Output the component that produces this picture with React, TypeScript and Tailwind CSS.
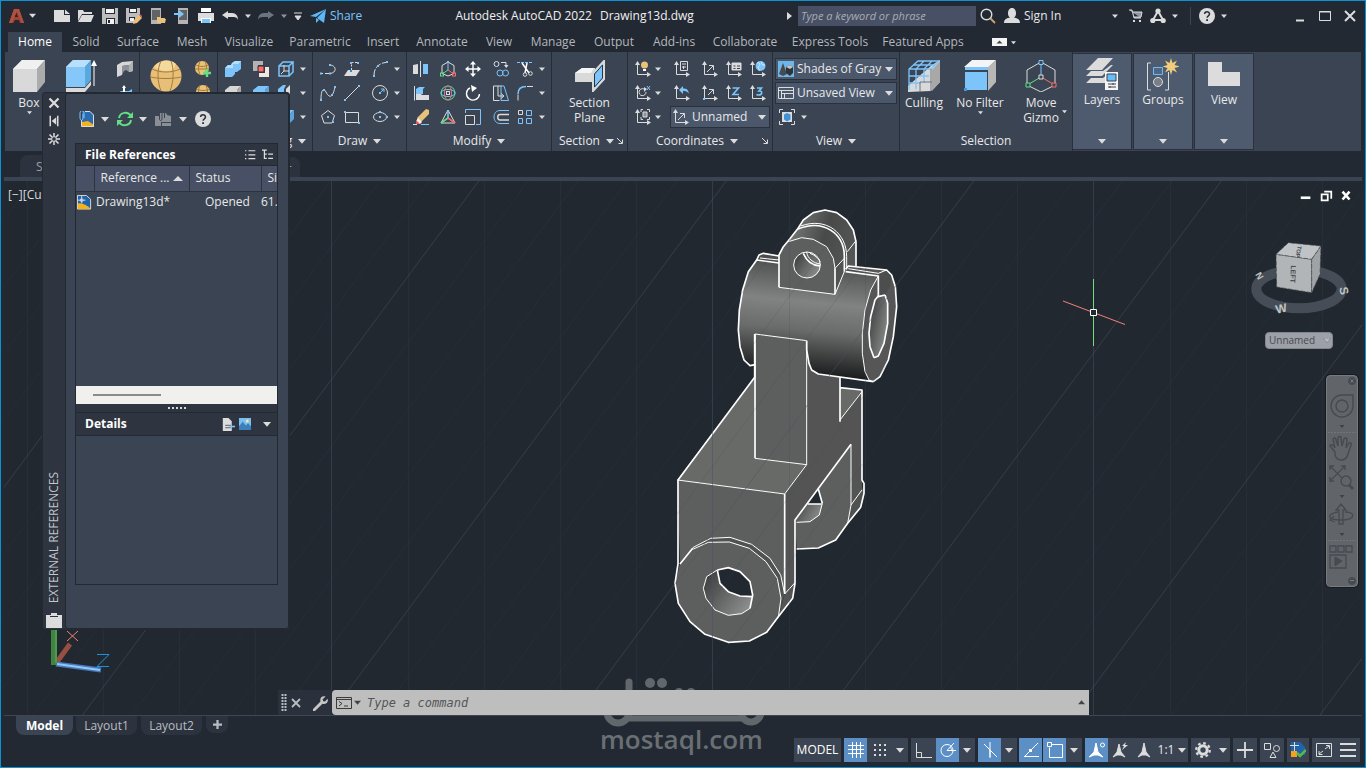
import type { ReactNode } from "react";

const W = "#dcdcdc";
const B = "#7cc4fa";
const G = "#62df84";
const R = "#f4706a";
const Y = "#e9c27a";

function Icon({ size = 16, box = 16, children }: { size?: number; box?: number; children: ReactNode }) {
  return (
    <svg width={size} height={size} viewBox={`0 0 ${box} ${box}`} fill="none" stroke={W} className="shrink-0" aria-hidden="true">
      {children}
    </svg>
  );
}

function Caret({ size = 6 }: { size?: number }) {
  return (
    <svg width={size} height={size} viewBox="0 0 6 6" className="shrink-0" aria-hidden="true">
      <path d="M0 1.5h6L3 5z" fill={W} />
    </svg>
  );
}

const dot = (x: number, y: number, c = B) => <rect key={`${x}-${y}`} x={x - 1} y={y - 1} width="2" height="2" fill={c} stroke="none" />;
const axes = (
  <>
    <path d="M2.5 1.5V13.5H13.5" />
    <path d="M0 4l2.5-4L5 4zM12 11v5l4-2.5z" fill={W} stroke="none" />
  </>
);
const help = (
  <>
    <circle cx="8" cy="8" r="8" fill={W} stroke="none" />
    <path d="M5.6 6c0-3 4.9-3 4.9 0 0 1.8-2.4 1.8-2.4 3.8" stroke="#2b323e" strokeWidth="1.5" />
    <rect x="7.2" y="11.2" width="1.8" height="1.8" fill="#2b323e" stroke="none" />
  </>
);

const icons: Record<string, ReactNode> = {
  logo: (
    <g stroke="none">
      <path d="M5 1h5l5 14h-4l-1-3H6l-2 3H0z" fill="#a14232" />
      <path d="M7 4l2 5H5.6z" fill="#222933" />
      <path d="M5 1h5l5 14h-2L8 3 3 15H0z" fill="#b0523f" />
    </g>
  ),
  new: <path d="M0 2h10v5h6v7H0z M11 1.500v4.500h5z" fill={W} stroke="none" />,
  open: <path d="M0 2h5l1 2h8v2H4L0 13zM4 7h12l-3 7H0z" fill={W} stroke="none" />,
  save: (
    <g stroke="none">
      <path d="M0 0h16v16H0z" fill="#bdbdbd" />
      <path d="M3 0h10v6H3zM4 10h9v6H4z" fill="#232a35" />
      <path d="M4 1h8v4H4zM5 11h7v5H5z" fill="#f2f2f2" />
      <path d="M6 12h2v3H6z" fill="#232a35" />
    </g>
  ),
  saveAs: (
    <g stroke="none">
      <path d="M0 0h14v8l-6 7H0z" fill="#bdbdbd" />
      <path d="M3 0h8v5H3zM3 9h6v4H3z" fill="#232a35" />
      <path d="M4 1h6v3H4zM4 10h4v3H4z" fill="#f2f2f2" />
      <path d="M7 16l1-4 5-5 3 3-5 5z" fill={Y} />
      <path d="M13 7l1-1 2 2v2z" fill="#e65b50" />
    </g>
  ),
  openMobile: (
    <g stroke="none">
      <path d="M1 0h10v16H1z" fill="#b5b5b5" />
      <path d="M2 2h8v10H2z" fill="#616467" />
      <path d="M7 9h3l1 1h4v1h1l-1 4H7z" fill={Y} />
    </g>
  ),
  saveMobile: (
    <g stroke="none">
      <path d="M4 0h10v16H4z" fill="#b5b5b5" />
      <path d="M5 2h8v10H5z" fill="#616467" />
      <path d="M0 5h5V2l5 4-5 4V7H0z" fill={B} />
    </g>
  ),
  print: (
    <g stroke="none">
      <path d="M3 0h10v4H3z" fill="#fff" />
      <path d="M0 5h16v8h-3v-3H3v3H0z" fill={W} />
      <path d="M3 10h10v5H3z" fill="#fff" />
      <path d="M4 11h8v4H4z" fill={B} />
    </g>
  ),
  undo: <path d="M0 7l6-4v2h4c4 0 6 3 6 7-1-3-3-3-6-3H6v2z" fill={W} stroke="none" />,
  redo: <path d="M16 7l-6-4v2H6C2 5 0 8 0 12c1-3 3-3 6-3h4v2z" fill="#6c7480" stroke="none" />,
  custom: <path d="M4 5h8M5 8h6l-3 4z" fill={W} />,
  share: (
    <g stroke="none" fill="#5fb8f5">
      <path d="M0 8L16 1 6 9z" />
      <path d="M7 10L16 1l-2 14z" />
      <path d="M6 10v5l3-3z" />
    </g>
  ),
  search: (
    <>
      <circle cx="6.5" cy="6.5" r="5.3" strokeWidth="1.4" />
      <path d="M10.5 10.5l4.5 4.5" stroke="#cfa36c" strokeWidth="1.8" />
    </>
  ),
  user: <path d="M8 0c5 0 5 9 1.800 9.500 3 .5 6.200 1.500 6.200 5.500H0c0-4 3-5 6.200-5.500C3 9 3 0 8 0z" fill={W} stroke="none" />,
  cart: (
    <>
      <path d="M1 2h3l2 8h7M5 4h9l-1 5H6" fill="#9096a0" />
      <path d="M5 12h2v2H5zM11 12h2v2h-2z" fill={W} stroke="none" />
    </>
  ),
  apps: (
    <>
      <path d="M8 3l5 9H3z" strokeWidth="2" />
      <g fill={W} stroke="none">
        <circle cx="8" cy="3" r="2.6" />
        <circle cx="2.800" cy="12.500" r="2.600" />
        <circle cx="13.200" cy="12.500" r="2.600" />
      </g>
    </>
  ),
  help,
  polysolid: (
    <g stroke="none">
      <path d="M0 4L5 1l11-1v10l-4 1V4L5 5v9l-5 2z" fill="#d7d7d7" />
      <path d="M5 5l7-1v7l-3-2-2 1-2 4z" fill="#8d9299" />
      <path d="M12 4l4-4v10l-4 1z" fill="#b0b0b0" />
    </g>
  ),
  presspull: (
    <g stroke="none">
      <path d="M0 9l4-3h8l3-2v8H0z" fill={B} />
      <path d="M7 0l2 3H8v6H6V3H5z" fill="#fff" />
    </g>
  ),
  meshPlus: (
    <>
      <circle cx="7" cy="7" r="7" fill={Y} stroke="none" />
      <path d="M1 4c4 2 8 2 12 0M0 8h14M5 0c-2 5-2 9 0 14M10 0c2 5 2 9 0 14" stroke="#a5782f" />
      <path d="M12 8v8M8 12h8" stroke={G} strokeWidth="2.400" />
    </>
  ),
  meshMinus: (
    <>
      <circle cx="8" cy="7" r="7" fill={Y} stroke="none" />
      <path d="M1 4c5 2 9 2 14 0M1 8h14M5 0c-2 5-2 9 0 14M11 0c2 5 2 9 0 14" stroke="#a5782f" />
    </>
  ),
  union: (
    <g stroke="none">
      <path d="M0 7l3-3h3l1-2 3-2h6v8l-4 3h-2v2l-3 3H0z" fill={B} />
      <path d="M0 7l3-3h3l1-2 3-2h6l-3 3H8v4z" fill="#b5defc" />
    </g>
  ),
  intersect: (
    <>
      <path d="M0 0h10v4h-5v6H0z" fill="#b3b3b3" stroke="none" />
      <path d="M12 6h4v10H6v-4h6z" fill="#f0e6e2" stroke="none" />
      <path d="M5 5h6v6H5z" fill={R} stroke="#3b2930" />
    </>
  ),
  extractEdges: (
    <>
      <path d="M1 5h10v10H1zM1 5l4-4h10L11 5M15 1v10l-4 4" stroke={B} strokeWidth="1.500" />
      <path d="M3 13l3-3V4M6 10h5" />
    </>
  ),
  box: (
    <g stroke="none">
      <path d="M0 5l5-4h11l-4 4v7H0z" fill="#d6d6d6" />
      <path d="M12 5l4-4v9l-4 4z" fill="#aaa" />
    </g>
  ),
  boxBlue: (
    <g stroke="none">
      <path d="M0 5l5-4h11l-4 4v7H0z" fill={B} />
      <path d="M12 5l4-4v9l-4 4z" fill="#5aa5dc" />
    </g>
  ),
  slice: (
    <g stroke="none">
      <path d="M0 4l5-4h3L6 4v12H0z" fill={B} />
      <path d="M8 4l4-4v12l-4 4z" fill={W} />
    </g>
  ),
  polyline: (
    <>
      <path d="M1 12.500h2M5 12.500h4M9 4c8 0 8 8 1 8.500" />
      {dot(1, 12.500)}
      {dot(10, 12.500)}
      {dot(10, 4)}
    </>
  ),
  region: (
    <>
      <path d="M4 9h12l-4 6H0z" fill={W} stroke="none" />
      <path d="M7.500 9V1.500M7.500 1.500H14" stroke={W} strokeDasharray="2 1.500" />
      {dot(7, 10, "#2d8bd8")}
      {dot(7, 2)}
      {dot(14, 2)}
    </>
  ),
  arc: (
    <>
      <path d="M2 14C2 7 7 2 14 1.500" strokeDasharray="6 1.500" />
      {dot(2, 15)}
      {dot(6, 5)}
      {dot(15, 1)}
    </>
  ),
  spline: (
    <>
      <path d="M1 14C1 4 4 3 6 7s6 9 9-5" />
      {dot(1, 15)}
      {dot(4, 5)}
      {dot(12, 10)}
      {dot(15, 2)}
    </>
  ),
  line: (
    <>
      <path d="M2 14L14 2" />
      {dot(1, 15)}
      {dot(15, 1)}
    </>
  ),
  circle: (
    <>
      <circle cx="8" cy="8" r="7.500" />
      <path d="M8 8l4-4M9 4h3v3" stroke={B} />
      {dot(8, 8)}
    </>
  ),
  polygon: (
    <>
      <path d="M8 1.500l6.500 5-2.500 7.500H4L1.500 6.500z" />
      {dot(8, 8)}
      {dot(13, 13)}
    </>
  ),
  rect: (
    <>
      <path d="M1.500 3.500h13v10h-13z" />
      {dot(1, 3)}
      {dot(15, 14)}
    </>
  ),
  ellipse: (
    <>
      <ellipse cx="8" cy="8" rx="6.500" ry="4.500" />
      {dot(8, 8)}
      {dot(15, 8)}
      {dot(8, 3)}
    </>
  ),
  mirror3d: (
    <>
      <path d="M0 4l5-1v10H0z" fill={W} stroke="none" />
      <path d="M10 3h5v10h-5z" fill={B} stroke="none" />
      <path d="M7.500 0v16" />
    </>
  ),
  gizmoMove: (
    <>
      <path d="M8 1l6 3.500v8L8 15l-6-2.500v-8z" />
      <path d="M8 9V2" stroke={B} />
      <path d="M8 9l-6 4" stroke={G} />
      <path d="M8 9l6 4" stroke={R} />
      {dot(8, 1)}
      <rect x="0.500" y="12" width="3" height="3" stroke={G} />
      <rect x="12.500" y="12" width="3" height="3" stroke={R} />
    </>
  ),
  move: (
    <>
      <path d="M8 2v12M2 8h12" strokeWidth="1.400" stroke="#fff" />
      <path d="M8 0l3 3.500H5zM8 16l3-3.500H5zM0 8l3.500-3v6zM16 8l-3.500-3v6z" fill="#fff" stroke="none" />
    </>
  ),
  copy: (
    <>
      <circle cx="3.500" cy="3" r="2.500" />
      <circle cx="7" cy="12" r="3" stroke={B} />
      <circle cx="12.500" cy="12" r="3" stroke={B} />
      <path d="M8 1.500h5v4" />
      <path d="M11 4h4.500L13.300 7z" fill={W} stroke="none" />
    </>
  ),
  trim: (
    <>
      <path d="M0 1.500h16" stroke={B} strokeDasharray="3 1" />
      <path d="M5 2l7 10M10 2L8 12" stroke="#fff" strokeWidth="1.500" />
      <circle cx="8" cy="13.500" r="1.800" />
      <circle cx="13.500" cy="12.500" r="1.800" />
    </>
  ),
  align: (
    <>
      <path d="M1.500 1v14.500" />
      <path d="M3 8h4l2 2h7v5H3z" fill={W} stroke="none" />
      <path d="M3 4l3-2h6l-2 2v5H3z" fill={B} stroke="none" />
    </>
  ),
  gizmoRotate: (
    <>
      <circle cx="8" cy="8" r="7" stroke={G} />
      <ellipse cx="8" cy="8" rx="3.500" ry="7" stroke={R} />
      <ellipse cx="8" cy="8" rx="7" ry="3.500" stroke={B} />
      <rect x="6.500" y="6.500" width="3" height="3" />
    </>
  ),
  rotate: (
    <>
      <path d="M5 2.800A6.500 6.500 0 1 0 14.500 9" strokeWidth="1.400" stroke="#fff" />
      <path d="M6 0l6 3-5 4z" fill="#fff" stroke="none" />
    </>
  ),
  stretch: (
    <>
      <path d="M8.500 1H.5v14.500h6" />
      <path d="M8 1h3L15.500 15.500H8z" stroke={B} />
      <path d="M5 1v10h5M8 8.500l3 2.500-3 2.500" />
    </>
  ),
  fillet: (
    <>
      <path d="M1 15.500v-6M10 1.500h6" />
      <path d="M1 9C1 4 4 1.500 9 1.500" stroke={B} strokeWidth="1.500" />
    </>
  ),
  erase: (
    <>
      <path d="M4 9L13 0l3 1v4l-8 8z" fill={Y} stroke="none" />
      <path d="M5 9l4 4-2 2H4l-1-3z" fill="#f3f3f3" stroke="none" />
      <path d="M3 11l4 4H3z" fill="#e9564c" stroke="none" />
      <path d="M0 15.500h4" />
      <path d="M8 15.500h8" stroke={B} />
    </>
  ),
  gizmoScale: (
    <>
      <path d="M8 1L1 14h14z" />
      <path d="M8 9V1" stroke={B} strokeWidth="1.600" />
      <path d="M8 9l-7 5" stroke={G} strokeWidth="1.600" />
      <path d="M8 9l7 5" stroke={R} strokeWidth="1.600" />
    </>
  ),
  scale: (
    <>
      <path d="M.5 4V.5h15v15H11" stroke={B} />
      <path d="M.5 6.500h9v9h-9z" />
    </>
  ),
  offset: (
    <>
      <path d="M16 1.500H7c-8 0-8 13 0 13h9" stroke={B} />
      <path d="M16 5.500H7C4 5.500 4 11 7 11h9" strokeWidth="1.400" />
    </>
  ),
  array: (
    <>
      <path d="M1.500 1.500h4v4h-4z" />
      <path d="M9.500 1.500h5v5h-5zM9.500 9.500h5v5h-5zM1.500 9.500h4v5h-4z" stroke={B} />
    </>
  ),
  ucsBulb: (
    <>
      {axes}
      <circle cx="9.500" cy="4" r="3.500" fill={Y} stroke="none" />
      <path d="M8 8h3v2H8z" fill="#fff" stroke="none" />
    </>
  ),
  ucsWorld: (
    <>
      {axes}
      <circle cx="10.500" cy="5" r="5" fill={B} stroke="none" />
      <path d="M7 2c2-1 4 1 2 3s1 3 0 5M12 1c-1 2 0 3 3 3" stroke="#dff0fd" />
    </>
  ),
  ucsNamed: (
    <>
      {axes}
      <path d="M6.500.5h7v9h-7zM8 3h4M8 6h4M9.500 5v3" />
    </>
  ),
  ucsArrow: (
    <>
      {axes}
      <path d="M5 11l6-6M7 4.500h4.500V9" />
    </>
  ),
  ucsList: (
    <>
      {axes}
      <path d="M6 2h9v7H6z" fill={W} />
      <path d="M7.500 5h2M11 5h3M7.500 7.500h2M11 7.500h3" stroke="#3b4453" />
    </>
  ),
  ucsRotate: (
    <>
      {axes}
      <path d="M9 4a3.500 3.500 0 1 0 2 3" />
      <path d="M9 2l3 2-3 3z" fill={W} stroke="none" />
      <path d="M12 1l3 4M15 1l-3 4" stroke={B} />
    </>
  ),
  ucsPrev: (
    <>
      {axes}
      <path d="M5 5l4-4v2.500c4 0 5 1 6 5-2-2-3-2.500-6-2.500V9z" fill={B} stroke="none" />
    </>
  ),
  ucsOrigin: (
    <>
      {axes}
      <path d="M6 10l5-5M7 4.500h4.500V9" />
      {dot(2, 14)}
    </>
  ),
  ucsZ: (
    <>
      {axes}
      <path d="M6.500 3h6L7 9.500h6" stroke={B} strokeWidth="1.600" />
    </>
  ),
  ucs3: (
    <>
      {axes}
      <path d="M7 3h4.500L9 6c4-.5 3.500 4-.5 4-1 0-2-.5-2-.5" stroke={B} strokeWidth="1.600" />
    </>
  ),
  ucsView: (
    <>
      {axes}
      <path d="M6 3V.5h2M12 .5h2.500V3M14.500 8v2.500H12M8 10.500H6V8" />
      <path d="M8 3h4v5H8z" fill="#8b9099" />
    </>
  ),
  viewFrame: (
    <>
      <path d="M.5 4V.5H4M12 .5h3.500V4M15.500 12v3.500H12M4 15.500H.5V12" />
      <path d="M3 3h10v10H3z" fill={W} stroke="none" />
      <path d="M5 5.500L8 4l3.500 1.500v5L8 12.500l-3-2z" fill="#3f93d6" stroke="none" />
    </>
  ),
  shades: (
    <g stroke="none">
      <path d="M0 0h16v16H0z" fill="#6db6ea" />
      <path d="M1 13L5 2l4 11-4 2z" fill="#474b50" />
      <path d="M8 6l4-2 3 2v6l-3 3-4-3z" fill="#303338" />
      <path d="M8 6l4-2 3 2-3 2z" fill="#c3c5c7" />
    </g>
  ),
  viewport: (
    <path d="M.5 2.500h15v11H.5zM.5 5.500h15M3.500 5.500v8M3.500 8.500h12M6.500 8.500v5" />
  ),
  attach: (
    <>
      <path d="M3 0h8l4 4v12H3z" fill="#2b6cb0" stroke="none" />
      <path d="M3 11l6-1 6 4v2H3z" fill="#f6b21b" stroke="none" />
      <path d="M2.500 9v6.500h12V4L11 .5H6" />
      <path d="M4 3v4c0 3-3 3-3 0V2c0-3 4-3 4 0v5" stroke={B} />
    </>
  ),
  refresh: (
    <>
      <path d="M2 7c1-6 9-7 12-2M14 9c-1 6-9 7-12 2" stroke={G} strokeWidth="2" />
      <path d="M16 1v6h-6zM0 15V9h6z" fill={G} stroke="none" />
    </>
  ),
  path: (
    <>
      <path d="M0 5h4V2h7l1 2 4 1v10H0z" fill="#8a8f96" stroke="none" />
      <path d="M7 2v6c0 2-2.500 2-2.500 0V2c0-3 5-3 5 0v5M6 11.500h10M6.500 11.500V15" stroke="#3b4453" />
    </>
  ),
  drawing: (
    <>
      <path d="M.5.5H10l4.500 4V15H.5z" fill="#1f63ab" />
      <path d="M1 9c5-1 9 2 13 5v1H1z" fill="#f6b21b" stroke="none" />
      <path d="M5 1v8M1 5.500h8" />
      <circle cx="5" cy="5.500" r="1.500" />
    </>
  ),
  list: <path d="M5 2.500h10M5 8.500h10M5 14h10M0 2.500h2M0 8.500h2M0 14h2" strokeWidth="1.600" />,
  tree: <path d="M0 1.500h7M3.500 2v11.500H7M3.500 7.500H7M9 7.500h7M9 13.500h7" strokeWidth="1.800" />,
  details: (
    <>
      <path d="M1 0h7l4 4v12H1z" fill={W} stroke="none" />
      <path d="M4 9h7M4 12h7" stroke="#39414e" />
      <path d="M9 10.500h7" stroke={B} strokeWidth="2" />
    </>
  ),
  preview: (
    <g stroke="none">
      <path d="M0 0h16v16H0z" fill="#79bff0" />
      <path d="M0 11l5-6 4 5 3-3 4 4v5H0z" fill="#3d7fb8" />
      <circle cx="11" cy="4" r="2" fill="#fbe59a" />
    </g>
  ),
  wrench: <path d="M1 14l7.500-7.500C7.500 3 10 .5 13.500 1.500l-3 3 .8 1.700 1.700.3 2.700-2.700c1 3.500-2 6-5.200 5L3 16H1z" fill="#c5c5c5" stroke="none" />,
  prompt: (
    <>
      <path d="M.5 2.500h15v11H.5zM.5 4.500h15" stroke="#3a3a3a" />
      <path d="M3 6.500l3 2-3 2.500M8 11h4" stroke="#3a3a3a" />
    </>
  ),
  grid: <path d="M4.500 0v16M8.500 0v16M12.500 0v16M0 3.500h16M0 7.500h16M0 11.500h16" stroke="#fff" />,
  snap: (
    <g fill={W} stroke="none">
      {[2, 7, 12].map((y) => [2, 7, 12].map((x) => <rect key={`${x}${y}`} x={x} y={y} width="2" height="2" />))}
    </g>
  ),
  ortho: <path d="M.5 1v14.500H16M.5 10.500h5v5" />,
  polar: (
    <>
      <circle cx="7" cy="8.500" r="6" stroke="#fff" />
      <path d="M7 8.500h9M7 8.500L14 1M10 5c1 1 1.500 2 1.500 3.500" stroke="#fff" />
    </>
  ),
  iso: <path d="M8 0v16M2 2l13 13M5 5l3 3v7" stroke="#fff" />,
  otrack: (
    <>
      <path d="M1 14.500h15M2 14L15 1" stroke="#fff" />
      <path d="M6 7h3v3H6z" fill="#fff" stroke="none" />
    </>
  ),
  osnap: (
    <>
      <path d="M4.500 2.500h11v13h-13v-10" stroke="#fff" />
      <path d="M.5.5h4v4h-4z" stroke="#fff" fill="#5b8fc5" />
    </>
  ),
  annoA: (
    <>
      <path d="M7 1l2 9 5 5-5-2H5l-5 2 5-5z" fill="#fff" stroke="#fff" />
      <circle cx="13.500" cy="3" r="2" stroke="#fff" />
    </>
  ),
  annoB: (
    <>
      <path d="M7 2l2 8 4 5-4-2H5l-4 2 4-5z" fill={W} />
      <path d="M14 0l-4 4h2l-2 4 6-5h-3z" fill={W} stroke="none" />
    </>
  ),
  anno: <path d="M8 1l2 9 4 5-4-2H6l-4 2 4-5z" fill={W} />,
  gear: (
    <>
      <circle cx="8" cy="8" r="4.200" strokeWidth="3" />
      <circle cx="8" cy="8" r="6.800" strokeWidth="2.200" strokeDasharray="2.670 2.670" />
    </>
  ),
  plus: <path d="M8 0v16M0 8h16" strokeWidth="1.800" />,
  isolate: (
    <>
      <path d="M.5 1.500h6v6h-6zM6 15.500l3-5.500 3 5.500z" />
      <circle cx="12.500" cy="6.500" r="3" />
    </>
  ),
  perf: (
    <>
      <path d="M1 0h9l5 5v8H1z" fill="#1f63ab" stroke="none" />
      <path d="M0 3.500h9M4.500 0v9" />
      <path d="M1 9h6v6H1z" fill="#f6a21b" stroke="none" />
      <path d="M7 11l3 3 6-6" stroke="#56b848" strokeWidth="2.600" />
    </>
  ),
  clean: (
    <>
      <path d="M.5 1.500h15v13H.5z" />
      <path d="M9 7l4-3M10 3.500h3.500V7M7 9l-4 3M3 9v3.500h3.500" />
    </>
  ),
  menu: <path d="M0 2h16M0 8h16M0 14h16" strokeWidth="1.800" />,
};

function Tool({ name, label }: { name: string; label?: string }) {
  return (
    <button type="button" aria-label={label ?? name} className="flex h-6 items-center">
      <Icon>{icons[name]}</Icon>
    </button>
  );
}

function More() {
  return (
    <button type="button" aria-label="More" className="flex h-6 items-center">
      <Caret />
    </button>
  );
}

function TitleBar() {
  const quick = ["new", "open", "save", "saveAs", "openMobile", "saveMobile", "print", "undo"];
  return (
    <header className="-mr-px flex h-[29px] items-center">
      <button type="button" aria-label="Application menu" className="mr-3 flex w-[33px] items-center gap-1 pl-1">
        <Icon>{icons.logo}</Icon>
        <Caret size={7} />
      </button>
      {quick.map((name) => (
        <button key={name} type="button" aria-label={name} className="flex w-6 justify-center">
          <Icon>{icons[name]}</Icon>
        </button>
      ))}
      <button type="button" aria-label="Undo history" className="flex w-3 justify-center"><Caret /></button>
      <button type="button" aria-label="Redo" className="flex w-6 justify-center"><Icon>{icons.redo}</Icon></button>
      <button type="button" aria-label="Redo history" className="flex w-3 justify-center opacity-60"><Caret /></button>
      <button type="button" aria-label="Customize" className="flex w-4 justify-center"><Icon>{icons.custom}</Icon></button>
      <button type="button" className="ml-1 flex items-center gap-1 text-[#7cc4fa]">
        <Icon>{icons.share}</Icon>
        Share
      </button>
      <h1 className="flex flex-1 justify-center gap-2 whitespace-nowrap text-[#f0f0f0]">
        <span>Autodesk AutoCAD 2022</span>
        <span>Drawing13d.dwg</span>
      </h1>
      <button type="button" aria-label="Collapse search" className="mr-1.5">
        <svg width="5" height="8" viewBox="0 0 5 8"><path d="M0 0l5 4-5 4z" fill={W} /></svg>
      </button>
      <input
        type="text"
        aria-label="Search"
        placeholder="Type a keyword or phrase"
        className="h-5 w-[178px] bg-[#475064] px-[3px] text-[11px] italic placeholder:text-[#a9adb5]"
      />
      <button type="button" aria-label="Search" className="flex w-6 justify-center"><Icon>{icons.search}</Icon></button>
      <button type="button" className="ml-1 flex w-[114px] items-center gap-1">
        <Icon>{icons.user}</Icon>
        <span className="mr-auto">Sign In</span>
        <Caret />
      </button>
      <button type="button" aria-label="Store" className="ml-2 flex w-5 justify-center"><Icon>{icons.cart}</Icon></button>
      <button type="button" aria-label="Apps" className="ml-1 flex items-center gap-1.5"><Icon>{icons.apps}</Icon><Caret /></button>
      <span className="ml-3 mr-2 h-[18px] w-px bg-[#3d4656]" />
      <button type="button" aria-label="Help" className="mr-15 flex items-center gap-1.5"><Icon>{icons.help}</Icon><Caret /></button>
      <button type="button" aria-label="Minimize" className="flex w-[25px] justify-center"><Icon><path d="M4 12.500h8" strokeWidth="2" /></Icon></button>
      <button type="button" aria-label="Maximize" className="flex w-[25px] justify-center"><Icon><path d="M2.500 3.500h11v9h-11zM2 4h12" /></Icon></button>
      <button type="button" aria-label="Close" className="flex w-[25px] justify-center"><Icon><path d="M3 3l10 10M13 3L3 13" strokeWidth="2" /></Icon></button>
    </header>
  );
}

const ribbonTabs = [
  { name: "Solid", width: "w-[48px]" },
  { name: "Surface", width: "w-[56px]" },
  { name: "Mesh", width: "w-[52px]" },
  { name: "Visualize", width: "w-[62px]" },
  { name: "Parametric", width: "w-[80px]" },
  { name: "Insert", width: "w-[46px]" },
  { name: "Annotate", width: "w-[72px]" },
  { name: "View", width: "w-[42px]" },
  { name: "Manage", width: "w-[66px]" },
  { name: "Output", width: "w-[56px]" },
  { name: "Add-ins", width: "w-[64px]" },
  { name: "Collaborate", width: "w-[78px]" },
  { name: "Express Tools", width: "w-[92px]" },
  { name: "Featured Apps", width: "w-[94px]" },
];

function RibbonTabs() {
  return (
    <nav className="mt-[2px] flex h-5 items-center whitespace-nowrap pl-[3px] text-[#b4b7bc]">
      <button type="button" className="h-full w-[54px] shrink-0 bg-[#3b4453] text-white">Home</button>
      {ribbonTabs.map((tab) => (
        <button key={tab.name} type="button" className={`shrink-0 text-center ${tab.width}`}>{tab.name}</button>
      ))}
      <button type="button" aria-label="Ribbon display" className="ml-[22px] flex items-center gap-1">
        <svg width="15" height="8" viewBox="0 0 15 8"><path d="M0 0h15v8H0z" fill="#f4f4f4" /><path d="M4.500 5.500h6l-3-3z" fill="#444" /></svg>
        <Caret size={5} />
      </button>
    </nav>
  );
}

function Panel({ title, width, caret = true, launcher = false, children }: {
  title?: string; width: string; caret?: boolean; launcher?: boolean; children: ReactNode;
}) {
  return (
    <section className={`flex shrink-0 flex-col border-r border-[#252c37] pt-[5px] ${width}`}>
      <div className="h-[72px]">{children}</div>
      <div className="flex h-[22px] items-center px-1 pt-0.5">
        <h2 className="flex flex-1 items-center justify-center gap-1.5">
          {title}
          {caret && <Caret size={8} />}
        </h2>
        {launcher && (
          <button type="button" aria-label={`${title} settings`}>
            <svg width="6" height="6" viewBox="0 0 6 6" fill="none" stroke={W}><path d="M0 0l5 5M5.500 1.500v4h-4" /></svg>
          </button>
        )}
      </div>
    </section>
  );
}

function BigTool({ label, width, caret = false, children }: { label: string; width: string; caret?: boolean; children: ReactNode }) {
  return (
    <button type="button" className={`flex shrink-0 flex-col items-center pt-[3px] leading-[15px] ${width}`}>
      {children}
      <span className="mt-[3px] whitespace-pre-line">{label}</span>
      {caret && <Caret size={5} />}
    </button>
  );
}

function Combo({ icon, label, value }: { icon: string; label: string; value: string }) {
  return (
    <label className="relative flex h-[22px] w-full items-center gap-[3px] border border-[#2a313d] bg-[#4b576b] pl-0.5">
      <Icon>{icons[icon]}</Icon>
      <select aria-label={label} className="h-full min-w-0 flex-1 appearance-none pr-3 outline-none">
        <option>{value}</option>
      </select>
      <span className="pointer-events-none absolute right-[3px] flex"><Caret size={8} /></span>
    </label>
  );
}

function CollapsedPanel({ title, children }: { title: string; children: ReactNode }) {
  return (
    <button type="button" className="mr-[3px] mt-0.5 flex h-[95px] w-[58px] shrink-0 flex-col items-center bg-[#4e5b6f] pt-1 outline outline-[#2a313d]">
      <svg width="32" height="34" viewBox="0 0 32 34" fill="none" aria-hidden="true">{children}</svg>
      <span>{title}</span>
      <span className="mb-1 mt-auto"><Caret size={8} /></span>
    </button>
  );
}

function Ribbon() {
  return (
    <div className="flex h-[99px] overflow-hidden bg-[#3b4453]">
      <Panel title="Modeling" width="w-[135px]" caret={false}>
        <div className="flex">
          <BigTool label="Box" width="w-12" caret>
            <svg width="32" height="32" viewBox="0 0 32 32">
              <path d="M0 9l9-9h23l-8 9v23H0z" fill="#d9d9d9" />
              <path d="M0 9l9-9h23l-8 9z" fill="#f0f0f0" />
              <path d="M24 9l8-9v22l-8 10z" fill="#acacac" />
            </svg>
          </BigTool>
          <BigTool label="Extrude" width="w-[58px]" caret>
            <svg width="32" height="32" viewBox="0 0 32 32">
              <path d="M0 7l7-7h18l-6 7v20H0z" fill="#84c7f8" />
              <path d="M0 7l7-7h18l-6 7z" fill="#b9e0fb" />
              <path d="M19 7l6-7v20l-6 7z" fill="#5aa9dc" />
              <path d="M0 28h19l6-7v4l-6 7H0z" fill="#dadada" />
              <path d="M28 26V3" stroke="#fff" />
              <path d="M25 6l3-6 3 6z" fill="#fff" />
            </svg>
          </BigTool>
          <div className="ml-1.5 flex flex-col">
            <Tool name="polysolid" />
            <Tool name="presspull" />
          </div>
        </div>
      </Panel>
      <Panel width="w-[78px]" caret={false}>
        <div className="flex">
          <BigTool label="Smooth" width="w-[51px]">
            <svg width="32" height="32" viewBox="0 0 32 32" fill="none">
              <circle cx="16" cy="16" r="15.500" fill="#e8bf78" />
              <path d="M4 7c5-7 16-9 22-3-2 4-2 5-3 6-7 2-13 1-19-3z" fill="#f4d99d" />
              <path d="M2 9c8 4 20 4 28 0M.5 17c9 2 22 2 31 0M11 1c-4 8-4 20 0 30M21 1c3 8 3 20-1 30" stroke="#a67c38" />
            </svg>
          </BigTool>
          <div className="ml-1 flex flex-col">
            <Tool name="meshPlus" />
            <Tool name="meshMinus" />
          </div>
        </div>
      </Panel>
      <Panel title="Solid Editing" width="w-[95px]">
        <div className="grid grid-cols-[28px_25px_22px_8px] pl-[7px]">
          <Tool name="union" /><Tool name="intersect" /><Tool name="extractEdges" /><More />
          <Tool name="box" label="Subtract" /><Tool name="boxBlue" label="Interfere" /><Tool name="slice" /><More />
          <Tool name="box" label="Thicken" /><Tool name="box" label="Imprint" /><Tool name="boxBlue" label="Shell" /><More />
        </div>
      </Panel>
      <Panel title="Draw" width="w-[94px]">
        <div className="grid grid-cols-[24px_28px_22px_8px] pl-[7px]">
          <Tool name="polyline" /><Tool name="region" /><Tool name="arc" /><More />
          <Tool name="spline" /><Tool name="line" /><Tool name="circle" /><More />
          <Tool name="polygon" /><Tool name="rect" /><Tool name="ellipse" /><More />
        </div>
      </Panel>
      <Panel title="Modify" width="w-[145px]">
        <div className="grid grid-cols-[27px_25px_28px_24px_22px_8px] pl-1.5">
          <Tool name="mirror3d" /><Tool name="gizmoMove" /><Tool name="move" /><Tool name="copy" /><Tool name="trim" /><More />
          <Tool name="align" /><Tool name="gizmoRotate" /><Tool name="rotate" /><Tool name="stretch" /><Tool name="fillet" /><More />
          <Tool name="erase" /><Tool name="gizmoScale" /><Tool name="scale" /><Tool name="offset" /><Tool name="array" /><More />
        </div>
      </Panel>
      <Panel title="Section" width="w-[76px]" launcher>
        <BigTool label={"Section\nPlane"} width="w-full">
          <svg width="32" height="32" viewBox="0 0 32 32">
            <path d="M1 13l7-5h13v14H1z" fill="#d9d9d9" />
            <path d="M1 13l7-5h12l-3 5z" fill="#f5f5f5" />
            <path d="M19 13L30 1v18L19 31z" fill={B} stroke="#d9d9d9" strokeWidth="2" />
            <path d="M20.500 14L28.500 5v13l-8 9z" fill={B} stroke="#2a3340" />
          </svg>
        </BigTool>
      </Panel>
      <Panel title="Coordinates" width="w-[145px]" launcher>
        <div className="grid grid-cols-[20px_15px_32px_24px_24px_20px] pl-[7px]">
          <Tool name="ucsBulb" /><More /><div className="pl-1"><Tool name="ucsNamed" /></div><Tool name="ucsArrow" /><Tool name="ucsList" /><Tool name="ucsWorld" />
          <Tool name="ucsRotate" /><More /><div className="pl-1"><Tool name="ucsPrev" /></div><Tool name="ucsOrigin" /><Tool name="ucsZ" /><Tool name="ucs3" />
          <Tool name="ucsView" /><More />
          <div className="col-span-4 flex items-center"><Combo icon="ucsArrow" label="Named UCS" value="Unnamed" /></div>
        </div>
      </Panel>
      <Panel title="View" width="w-[127px]">
        <div className="flex flex-col px-0.5 pt-px">
          <Combo icon="shades" label="Visual style" value="Shades of Gray" />
          <div className="my-0.5 flex"><Combo icon="viewport" label="Saved view" value="Unsaved View" /></div>
          <div className="-mt-px flex gap-1.5 pl-1"><Tool name="viewFrame" /><More /></div>
        </div>
      </Panel>
      <Panel title="Selection" width="w-[173px]" caret={false}>
        <div className="flex">
          <BigTool label="Culling" width="w-12">
            <svg width="32" height="32" viewBox="0 0 32 32" fill="none">
              <path d="M0 32V26L24 5l8-5v22l-9 9z" fill="#d9d9d9" />
              <path d="M24 10l8-9v21l-8 9z" fill="#a8a8a8" />
              <path d="M1 30V9l9-8h21l-8 8H1M1 16h20M1 23h12M8 9v20M16 9v14M8 9l8-8M16 9l8-8M5 5h22" stroke={B} strokeWidth="1.300" />
              <path d="M12 22v10M23 9v22M12 22h12" stroke="#6e747c" />
            </svg>
          </BigTool>
          <BigTool label="No Filter" width="w-16" caret>
            <svg width="32" height="32" viewBox="0 0 32 32">
              <path d="M0 7l8-7h24l-7 7z" fill="#f4f4f4" />
              <path d="M24 7l8-7v22l-8 9z" fill="#b7b7b7" />
              <path d="M1 7h23v3H1zM1 12h22v18H1z" fill={B} />
              <path d="M0 28h3v3H0z" fill="#4499db" />
            </svg>
          </BigTool>
          <div className="flex items-center">
            <BigTool label={"Move\nGizmo"} width="w-[58px]">
              <svg width="32" height="32" viewBox="0 0 32 32" fill="none" stroke={W}>
                <path d="M16 2l14 8v15l-14 7L2 25V10z" />
                <path d="M16 17V4" stroke={B} />
                <path d="M16 17L4 24" stroke={G} />
                <path d="M16 17l12 7" stroke={R} />
                <path d="M14 .5h4v4h-4z" stroke={B} fill="#3b4453" />
                <path d="M1 23h4v4H1z" stroke={G} fill="#3b4453" />
                <path d="M27 23h4v4h-4z" stroke={R} fill="#3b4453" />
                <path d="M14 15h4v4h-4z" fill="#3b4453" />
              </svg>
            </BigTool>
            <button type="button" aria-label="Gizmo options" className="-ml-2 mt-10"><Caret size={5} /></button>
          </div>
        </div>
      </Panel>
      <CollapsedPanel title="Layers">
        <path d="M0 12L12 0h15L16 12zM0 18l5-5h12l8-6h2l-11 11zM0 25l5-5h12l5-4v9z" fill={W} />
        <path d="M19 14h13v18H19z" fill="#f5f5f5" />
        <path d="M21 16h9v7h-9z" fill="#69bdf6" stroke="#394150" />
        <path d="M22 26h8M22 29h8M27 25v2M24 28v2" stroke="#394150" />
      </CollapsedPanel>
      <CollapsedPanel title="Groups">
        <path d="M4 5H.5v27H4M18 32h3.500V14" stroke={W} />
        <path d="M6.500 9.500h9v7h-9z" stroke="#69bdf6" fill="#4f6684" />
        <circle cx="11" cy="24" r="4.500" stroke={W} fill="#7a7f85" />
        <path d="M24 0l1.500 5L30 2.500 27.500 7l5 1.500-5 1.500 2.500 4.500-4.500-2.500L24 17l-1.500-5L18 14.500 20.500 10l-5-1.500 5-1.500L18 2.500 22.500 5z" fill="#f2cd79" />
      </CollapsedPanel>
      <CollapsedPanel title="View">
        <path d="M0 4h14v10h18v14H0z" fill={W} />
      </CollapsedPanel>
    </div>
  );
}

const verticals = Array.from({ length: 18 }, (_, i) => ({ x: Math.round(26.6 + i * 76.2) + 0.5, major: i % 5 === 4 }));
const diagonals = Array.from({ length: 37 }, (_, i) => ({ x: -15.5 + i * 49.5, major: i % 5 === 0 }));

function DrawingCanvas() {
  return (
    <svg viewBox="4 181 1358 534" preserveAspectRatio="xMidYMid slice" className="absolute inset-0 h-full w-full" aria-label="Clevis bracket model">
      <defs>
        <linearGradient id="barrel" x1="0.55" y1="0" x2="0.45" y2="1">
          <stop offset="0.05" stopColor="#4a4c4c" />
          <stop offset="0.38" stopColor="#818382" />
          <stop offset="0.6" stopColor="#6a6c6b" />
          <stop offset="0.8" stopColor="#3b3d3d" />
          <stop offset="0.95" stopColor="#17191b" />
        </linearGradient>
        <linearGradient id="lug" x1="0" y1="0.2" x2="1" y2="0.6">
          <stop offset="0" stopColor="#7a7c7b" />
          <stop offset="0.5" stopColor="#484a4a" />
          <stop offset="1" stopColor="#565858" />
        </linearGradient>
        <linearGradient id="bore" x1="0" y1="0" x2="1" y2="0.7">
          <stop offset="0" stopColor="#343636" />
          <stop offset="1" stopColor="#8b8d8c" />
        </linearGradient>
      </defs>
      <g transform="translate(660 200) scale(0.33333)">
        <g>
          <path d="M573 733V915L563 970 527 1020 475 1044 410 1047 405 960z" fill="#5c5f5e" />
          <path d="M475 868L487 910 478 945 450 965 410 967z" fill="url(#bore)" />
          <path d="M475 868L443 912 485 912z" fill="#212830" />
          <path d="M573 915L606 870 612 855 612 885 602 922 563 970z" fill="#505251" />
          <path d="M52 840L187 660 284 532V775L440 794 374 882z" fill="#686a67" />
          <path d="M52 840L374 882V1182L320 1150 60 1092z" fill="#5c5f5e" />
          <path d="M540 532V565L606 570V870L573 915V733L405 960V1150L398 1195 355 1252 374 1182V882L440 794V422L447 480 475 522z" fill="#545454" />
          <path d="M540 565L606 570 540 660z" fill="#686a67" />
          <path d="M60 1088L98 1043 152 1015 210 1012 275 1033 330 1075 362 1125 374 1182 355 1252 330 1180z" fill="#505251" />
          <path d="M60 1092L45 1150 55 1210 90 1265 135 1303 205 1327 268 1323 320 1297 355 1250 363 1190 350 1130 318 1083 268 1045 208 1024 150 1026 98 1048z" fill="#5c5f5e" />
          <path d="M205 1103L240 1115 270 1145 278 1185 270 1225 245 1241 205 1246 165 1230 138 1195 130 1165 140 1130 172 1110z" fill="url(#bore)" />
          <path d="M172 1110L205 1103 240 1115 270 1145 278 1190 240 1188 205 1175 180 1150z" fill="#212830" />
          <path d="M290 180L297 165 310 160 357 168 557 208 655 228 632 270 615 330 607 400 607 460 615 515 627 540 640 545 475 522 450 505 440 470V422L285 402V494L270 497 252 480 240 440 235 390 238 330 248 270 265 215z" fill="url(#barrel)" />
          <path d="M557 208L565 198 680 210 695 225 706 260 710 320 700 410 685 480 660 530 640 545 627 540 615 515 607 460 607 400 615 330 632 270 655 228z" fill="#565656" />
          <path d="M655 228L680 210 695 225 690 260 675 285 655 288z" fill="#4c4e4e" />
          <path d="M675 285L683 310 683 370 672 430 655 468 642 473 630 440 627 400 632 350 645 300 655 288z" fill="url(#bore)" />
          <path d="M285 402L440 422V794L285 775z" fill="#5c5f5e" />
          <path d="M385 125L412 88 430 60 460 38 495 30 530 38 560 60 580 90 588 125V198L557 212 525 283V205L500 140 460 118 425 113z" fill="url(#lug)" />
          <path d="M357 262V165L370 140 390 122 425 113 460 118 500 140 520 175 525 205V283z" fill="#5c5f5e" />
          <ellipse cx="441" cy="195" rx="40" ry="39" fill="url(#bore)" />
        </g>
        <g fill="none" stroke="#fff" strokeWidth="5" strokeLinejoin="round">
          <path d="M54 1092V840L284 532V402M54 1092L45 1150 55 1210 90 1265 135 1303 205 1327 268 1323 320 1297 355 1250 398 1195 405 1150V960L573 733" />
          <path d="M60 1092L98 1045M374 882V1182" />
          <path d="M410 1047L475 1044 527 1020 563 970 602 922 612 880 612 850 606 840V570L540 563M540 532V665" />
          <path d="M285 775V402M440 422V450L447 490 455 510 475 522 640 545" />
          <path d="M285 494L270 497 252 480 240 440 235 390 238 330 248 270 265 215 290 180 297 165 310 160 357 168M290 180L357 189" />
          <path d="M557 215L655 228V290L675 285M557 208L565 198 680 210 695 225 706 260 710 320 700 410 685 480 660 530 640 545" />
          <path d="M675 285L683 310 683 370 672 430 655 468 642 473M642 473L630 440 627 400 632 350 645 300 655 288" />
          <path d="M357 262V165L370 140 385 122 412 88 430 60 460 38 495 30 530 38 560 60 580 90 588 125V198" />
          <path d="M412 88C490 55 553 100 553 170V215M525 205V283" />
          <path d="M172 1110L205 1103 240 1115 270 1145 278 1185 270 1225M172 1110L180 1150 205 1175 240 1188 278 1190M475 868L487 910M443 912H485M430 160C440 185 455 196 480 198" />
        </g>
        <g fill="none" stroke="#fff" strokeWidth="3" strokeLinejoin="round">
          <path d="M52 840L374 882 440 794V422L285 402M285 775L440 794" />
          <path d="M98 1043L152 1015 210 1012 275 1033 330 1075 362 1125 374 1182 405 1148M98 1048L145 1027 208 1026 268 1045 318 1085 352 1135 363 1195 355 1252" />
          <path d="M270 1225L245 1241 205 1246 165 1230 138 1195 130 1165 140 1130 172 1110M487 910L478 945 450 965 410 967" />
          <path d="M573 733V915L563 970M573 915L606 870M540 660L606 575" />
          <path d="M655 228L632 270 615 330 607 400 607 460 615 515 627 540 640 545M300 174L357 180M565 206L655 220 680 210" />
          <path d="M385 125L425 113 460 118 500 140 520 175 525 205M357 262L525 283 553 215M525 205L553 175M422 78C500 50 560 100 560 170V208M562 155L588 122" />
          <ellipse cx="441" cy="195" rx="40" ry="39" />
          <path d="M440 156C442 175 460 190 481 192M450 160C465 165 475 175 481 185" />
        </g>
      </g>
      {verticals.map((line) => (
        <path key={line.x} d={`M${line.x} 181V715`} stroke={line.major ? "rgba(72,80,104,0.5)" : "rgba(62,70,95,0.2)"} />
      ))}
      {diagonals.map((line) => (
        <path key={line.x} d={`M${line.x} 180L${line.x - 397} 715`} stroke={line.major ? "rgba(76,84,100,0.5)" : "rgba(62,70,95,0.18)"} />
      ))}
      <path d="M1093.500 279v67" stroke="#73dc80" />
      <path d="M1063 301l62 23.500" stroke="#f4807a" />
      <path d="M1090.500 309.500h6v6h-6z" fill="#212830" stroke="#fff" />
      <path d="M57 662l13-18" stroke="#97503f" strokeWidth="5" />
      <path d="M56 664l45 6" stroke="#4779bd" strokeWidth="5" />
      <path d="M57 664l43 6" stroke="#8fc9f5" strokeWidth="2" />
      <path d="M54 625v40" stroke="#3f8540" strokeWidth="6" />
      <path d="M56 625v38" stroke="#63ad64" />
      <path d="M67 631l11 10M78 631l-11 10" stroke="#f4807a" />
      <path d="M97 654.500h12L97 666.500h12" stroke="#1c93d8" fill="none" />
    </svg>
  );
}

function ViewCube() {
  return (
    <div className="absolute right-2 top-[53px] flex w-[110px] flex-col items-center">
      <svg width="110" height="86" viewBox="0 0 330 258" aria-label="View cube">
        <ellipse cx="165" cy="165" rx="128" ry="58" fill="none" stroke="#474d57" strokeWidth="30" />
        <g stroke="#3e4247" strokeWidth="2" strokeDasharray="14 5">
          <path d="M96 61l107 15v100L98 159z" fill="#b1b5b8" />
          <path d="M96 61l37-35 98 10-28 40z" fill="#bfc3c5" />
          <path d="M203 76l28-40-3 85-25 55z" fill="#9fa3a6" />
        </g>
        <g fontFamily="Liberation Sans" fontWeight="bold" fill="#45494f">
          <text transform="translate(141 94) rotate(92)" fontSize="21">LEFT</text>
          <text transform="translate(158 52) rotate(100)" fontSize="17" textAnchor="middle">TOP</text>
        </g>
        <g fontFamily="Liberation Sans" fontWeight="bold" fill="#c1c4c6" fontSize="36" textAnchor="middle">
          <text transform="translate(38 130) rotate(60)" fontSize="28">N</text>
          <text transform="translate(288 172) rotate(80)">S</text>
          <text transform="translate(114 236) rotate(-12)">W</text>
        </g>
      </svg>
      <button type="button" className="mt-3 flex h-[17px] w-[68px] items-center gap-2 rounded-[4px] border border-[#82868d] bg-[#9da0a8] pl-[3px] text-[10px] text-[#474b52]">
        Unnamed
        <svg width="8" height="5" viewBox="0 0 8 5"><path d="M0 0h8L4 5z" fill="#b7bac0" stroke="#888c93" /></svg>
      </button>
    </div>
  );
}

function NavBar() {
  return (
    <div className="absolute right-1 top-[194px] flex h-[212px] w-8 flex-col items-center rounded-[4px] border border-[#777b80] bg-[#616569] outline outline-[#171b20]">
      <svg width="32" height="210" viewBox="0 0 32 210" fill="none" stroke="#464b51" aria-label="Navigation tools">
        <circle cx="26" cy="5" r="3.500" fill="#464b51" />
        <path d="M24.500 3.500l3 3M27.500 3.500l-3 3" stroke="#777b80" />
        <path d="M16 19h11v11a11 11 0 1 1-11-11z" strokeWidth="1.400" />
        <circle cx="16" cy="30" r="6" strokeWidth="1.400" />
        <path d="M13.500 49h5l-2.500 3zM13.500 119h5l-2.500 3zM13.500 157h5l-2.500 3z" fill="#3d4147" stroke="none" />
        <path d="M2 56.500h28M2 164.500h28" strokeDasharray="2 1" stroke="#70757a" />
        <path d="M9 76l-5-6c1-3 4 0 5 2l-2-9c1-2 3-1 3 1l2 6v-8c0-2 3-2 3 0l1 8 2-7c1-2 3-1 3 1l-1 8 3-5c2-1 3 0 2 2l-3 9c-1 5-5 6-7 6-4 0-5-2-6-5z" strokeWidth="1.400" />
        <path d="M4 90l15 15M19 90L4 105M4 94v-4h4M15 90h4v4M4 101v4h4" strokeWidth="1.400" />
        <circle cx="20" cy="105" r="5" fill="#616569" strokeWidth="1.400" />
        <path d="M23 109l4 4" strokeWidth="3" />
        <path d="M13 148v-14h-3l5-6 5 6h-3v14z" strokeWidth="1.300" />
        <path d="M12 136c-12 2-11 8 3 8 15 0 15-8 4-8M8 140l-4 4 5 2" strokeWidth="1.300" />
        <path d="M4 170h6v6H4zM12 170h6v6h-6zM20 170h6v6h-6zM4 179h16v13H4z" strokeWidth="1.300" />
        <path d="M9 181l7 4-7 5z" fill="#464b51" />
        <circle cx="26" cy="205" r="3.500" fill="#464b51" />
        <path d="M24 204.500h4" stroke="#777b80" />
      </svg>
    </div>
  );
}

function CommandLine() {
  return (
    <form className="absolute bottom-0 left-[273px] right-[272px] flex h-[25px] items-center bg-[#2a303c]">
      <svg width="6" height="18" viewBox="0 0 6 18" className="ml-[3px]"><path d="M1.500 0v18M4.500 0v18" stroke="#b9bcc0" strokeWidth="2" strokeDasharray="2 1" /></svg>
      <button type="button" aria-label="Close command line" className="ml-px"><Icon><path d="M4 4l8 8M12 4l-8 8" stroke="#b9bcc0" strokeWidth="1.800" /></Icon></button>
      <button type="button" aria-label="Customize command line" className="ml-2 mr-1"><Icon>{icons.wrench}</Icon></button>
      <div className="flex h-full flex-1 items-center gap-0.5 rounded-l-sm bg-[#c6c6c6]/95 px-1">
        <Icon>{icons.prompt}</Icon>
        <svg width="7" height="7" viewBox="0 0 6 6"><path d="M0 1.500h6L3 5z" fill="#444" /></svg>
        <input type="text" aria-label="Command" placeholder="Type a command" className="ml-1 min-w-0 flex-1 font-['DejaVu_Sans_Mono',monospace] text-[12px] italic outline-none placeholder:text-[#555]" />
        <svg width="7" height="7" viewBox="0 0 6 6"><path d="M0 4.500h6L3 1z" fill="#444" /></svg>
      </div>
    </form>
  );
}

function Watermark() {
  return (
    <div className="pointer-events-none absolute left-[599px] top-[676px] text-[#6a6f74]">
      <svg width="168" height="50" viewBox="0 0 168 50" fill="none" stroke="#62676c" strokeWidth="7" strokeLinecap="round" aria-label="mostaql">
        <path d="M29 5v23" />
        <path d="M7 35a11 11 0 0 0 22 0" />
        <path d="M27 41.500h116" strokeWidth="6" strokeLinecap="butt" />
        <circle cx="151" cy="35" r="10" />
        <g fill="#62676c" stroke="none">
          <circle cx="50" cy="6" r="5" />
          <circle cx="62" cy="6" r="5" />
          <circle cx="79" cy="15" r="4" />
          <circle cx="91" cy="15" r="4" />
        </g>
      </svg>
      <p className="-mt-1 font-['Open_Sans',sans-serif] text-[26px] font-semibold leading-8">mostaql.com</p>
    </div>
  );
}

function Viewport() {
  return (
    <main className="relative mx-[-1px] min-h-[534px] flex-1 overflow-hidden bg-[#212830]">
      <DrawingCanvas />
      <span className="absolute left-1 top-1.5 text-[#d8dadd]">[−][Custom View]</span>
      <div className="absolute right-[9px] top-2 flex gap-1.5 text-white">
        <button type="button" aria-label="Minimize view"><Icon size={14}><path d="M2 10h11" stroke="#fff" strokeWidth="3" /></Icon></button>
        <button type="button" aria-label="Restore view"><Icon size={14}><path d="M3 6h7v7H3zM6 3h8v8" stroke="#fff" strokeWidth="2" /></Icon></button>
        <button type="button" aria-label="Close view"><Icon size={14}><path d="M4 3l8 9M12 3l-8 9" stroke="#fff" strokeWidth="3" /></Icon></button>
      </div>
      <ViewCube />
      <NavBar />
    </main>
  );
}

function ReferencesPalette() {
  return (
    <aside className="absolute left-[41px] top-[91px] flex h-[538px] w-[248px] rounded-[3px] border border-[#222933] bg-[#2e3440]">
      <div className="flex w-[22px] flex-col items-center pt-1">
        <button type="button" aria-label="Close palette"><Icon size={12}><path d="M2 2l12 12M14 2L2 14" strokeWidth="3" /></Icon></button>
        <button type="button" aria-label="Auto-hide" className="mt-1.5"><Icon size={12}><path d="M3 1v14M13 1v14" strokeWidth="2" /><path d="M5 8l6-5v10z" fill={W} stroke="none" /></Icon></button>
        <button type="button" aria-label="Properties" className="mt-1.5"><Icon size={12}><path d="M8 0v16M0 8h16M2 2l12 12M14 2L2 14" strokeWidth="2" /><circle cx="8" cy="8" r="3" fill="#2e3440" /></Icon></button>
        <h2 className="mb-2.5 mt-auto rotate-180 text-[#c3c6ca] [writing-mode:vertical-rl]">EXTERNAL REFERENCES</h2>
        <Icon><path d="M0 2h5V0h6v2h5v13H0z" fill={W} stroke="none" /><path d="M4 3.500h8" stroke="#2e3440" /></Icon>
      </div>
      <div className="flex min-w-0 flex-1 flex-col rounded-[3px] border border-[#222933] bg-[#3b4453] pl-[9px] pr-[10px] pt-[17px]">
        <div className="flex items-center pl-1">
          <button type="button" aria-label="Attach" className="mr-2 flex items-center gap-1.5"><Icon>{icons.attach}</Icon><Caret size={8} /></button>
          <button type="button" aria-label="Refresh" className="mr-2 flex items-center gap-1.5"><Icon>{icons.refresh}</Icon><Caret size={8} /></button>
          <button type="button" aria-label="Change path" className="mr-2 flex items-center gap-2"><Icon>{icons.path}</Icon><Caret size={8} /></button>
          <button type="button" aria-label="Palette help"><Icon>{icons.help}</Icon></button>
        </div>
        <section className="mt-4 flex h-[442px] flex-col border border-[#222933]">
          <div className="flex h-[22px] items-center gap-1.5 border-b border-[#222933] bg-[#2e3440] pl-[9px] pr-1">
            <h3 className="mr-auto font-bold text-white">File References</h3>
            <button type="button" aria-label="List view"><Icon size={11}>{icons.list}</Icon></button>
            <button type="button" aria-label="Tree view"><Icon size={11}>{icons.tree}</Icon></button>
          </div>
          <div className="h-[220px] shrink-0 overflow-hidden">
            <table className="w-[250px] table-fixed border-collapse text-left">
              <colgroup>
                <col className="w-[18px]" /><col className="w-[95px]" /><col className="w-[72px]" /><col />
              </colgroup>
              <thead>
                <tr className="h-[25px] bg-[#475064] [&>th]:border [&>th]:border-t-0 [&>th]:border-[#2c333f] [&>th]:font-normal">
                  <th aria-label="Type" className="border-l-0!" />
                  <th className="pl-1.5">
                    <span className="flex items-center gap-1">Reference ...<svg width="10" height="5" viewBox="0 0 10 5"><path d="M0 5h10L5 0z" fill={W} /></svg></span>
                  </th>
                  <th className="pl-1.5">Status</th>
                  <th className="pl-1.5">Size</th>
                </tr>
              </thead>
              <tbody>
                <tr className="h-[22px]">
                  <td className="pl-px"><Icon size={15}>{icons.drawing}</Icon></td>
                  <td className="pl-0.5">Drawing13d*</td>
                  <td className="pl-4">Opened</td>
                  <td>61.5 KB</td>
                </tr>
              </tbody>
            </table>
          </div>
          <div className="flex h-[18px] shrink-0 items-center bg-[#f0f0ee]"><span className="ml-[17px] h-0.5 w-[68px] bg-[#8b8b88]" /></div>
          <div className="flex h-2 shrink-0 items-center justify-center gap-0.5 bg-[#2e3440]">
            {[0, 1, 2, 3, 4].map((i) => <span key={i} className="size-0.5 bg-[#d8d8d8]" />)}
          </div>
          <div className="flex h-6 shrink-0 items-center gap-1 border-y border-[#222933] bg-[#2e3440] pl-[9px] pr-1.5">
            <h3 className="mr-auto font-bold text-white">Details</h3>
            <button type="button" aria-label="Details"><Icon size={13}>{icons.details}</Icon></button>
            <button type="button" aria-label="Preview" className="mr-2"><Icon size={12}>{icons.preview}</Icon></button>
            <Caret size={8} />
          </div>
        </section>
      </div>
    </aside>
  );
}

function StatusGroup({ children }: { children: ReactNode }) {
  return <div className="flex h-6 items-center bg-[#3b4453]">{children}</div>;
}

function Status({ name, width = "w-[23px]", on = false }: { name: string; width?: string; on?: boolean }) {
  return (
    <button type="button" aria-label={name} aria-pressed={on} className={`flex h-full items-center justify-center ${width} ${on ? "bg-[#5b8fc5]" : ""}`}>
      <Icon>{icons[name]}</Icon>
    </button>
  );
}

function StatusMore({ width = "w-4" }: { width?: string }) {
  return <button type="button" aria-label="Options" className={`flex justify-center ${width}`}><Caret size={8} /></button>;
}

function Footer() {
  return (
    <footer>
      <nav className="-mx-px flex h-5 items-start border-t border-[#3f4652] pl-3 text-[#b9bcc1]">
        <button type="button" className="h-[19px] w-[57px] rounded-b-lg bg-[#3b4453] font-bold text-white">Model</button>
        <button type="button" className="ml-[3px] h-[19px] w-[61px] rounded-b-lg bg-[#2c333f]">Layout1</button>
        <button type="button" className="ml-1 h-[19px] w-[61px] rounded-b-lg bg-[#2c333f]">Layout2</button>
        <button type="button" aria-label="New layout" className="ml-1 flex h-[17px] w-[22px] items-center justify-center rounded-b-lg bg-[#2c333f]">
          <Icon size={9}><path d="M8 0v16M0 8h16" stroke="#b9bcc1" strokeWidth="4" /></Icon>
        </button>
      </nav>
      <div className="flex h-8 items-center justify-end gap-[3px] pb-0.5 pr-px">
        <StatusGroup><button type="button" className="w-[47px] text-white">MODEL</button></StatusGroup>
        <StatusGroup><Status name="grid" on /><Status name="snap" width="w-[25px]" /><StatusMore /></StatusGroup>
        <StatusGroup><Status name="ortho" width="w-[25px]" /><Status name="polar" on /><StatusMore /></StatusGroup>
        <StatusGroup><Status name="iso" on /><StatusMore /></StatusGroup>
        <div className="-ml-px flex gap-px"><StatusGroup><Status name="otrack" on /></StatusGroup><StatusGroup><Status name="osnap" on /><StatusMore /></StatusGroup></div>
        <StatusGroup>
          <Status name="annoA" on />
          <Status name="annoB" />
          <Status name="anno" width="w-[25px]" />
          <button type="button" className="flex w-8 items-center justify-center gap-1">1:1 <Caret size={8} /></button>
        </StatusGroup>
        <StatusGroup><Status name="gear" width="w-6" /><StatusMore width="w-[15px]" /></StatusGroup>
        <StatusGroup><Status name="plus" width="w-6" /></StatusGroup>
        <StatusGroup><Status name="isolate" width="w-6" /></StatusGroup>
        <StatusGroup><Status name="perf" width="w-[22px]" /></StatusGroup>
        <StatusGroup><Status name="clean" /><Status name="menu" width="w-[25px]" /></StatusGroup>
      </div>
    </footer>
  );
}

export default function App() {
  return (
    <div className="relative flex min-h-screen flex-col border border-[#0a93d6] bg-[#222933] px-1 font-['Open_Sans','Noto_Sans',sans-serif] text-xs text-[#e8e8e8]">
      <TitleBar />
      <RibbonTabs />
      <Ribbon />
      <div className="-mx-px flex h-[30px] items-end border-b-4 border-[#3b4453] text-[#9a9fa7]">
        <span className="ml-4 flex h-[22px] w-[265px] items-center rounded-t-lg bg-[#2c333f] pl-4 pt-px">Start</span>
        <span className="flex h-5 w-[15px] items-center rounded-t-lg bg-[#2c333f]">+</span>
      </div>
      <Viewport />
      <Footer />
      <Watermark />
      <div className="absolute inset-x-1 bottom-[52px] h-0"><CommandLine /></div>
      <ReferencesPalette />
    </div>
  );
}
